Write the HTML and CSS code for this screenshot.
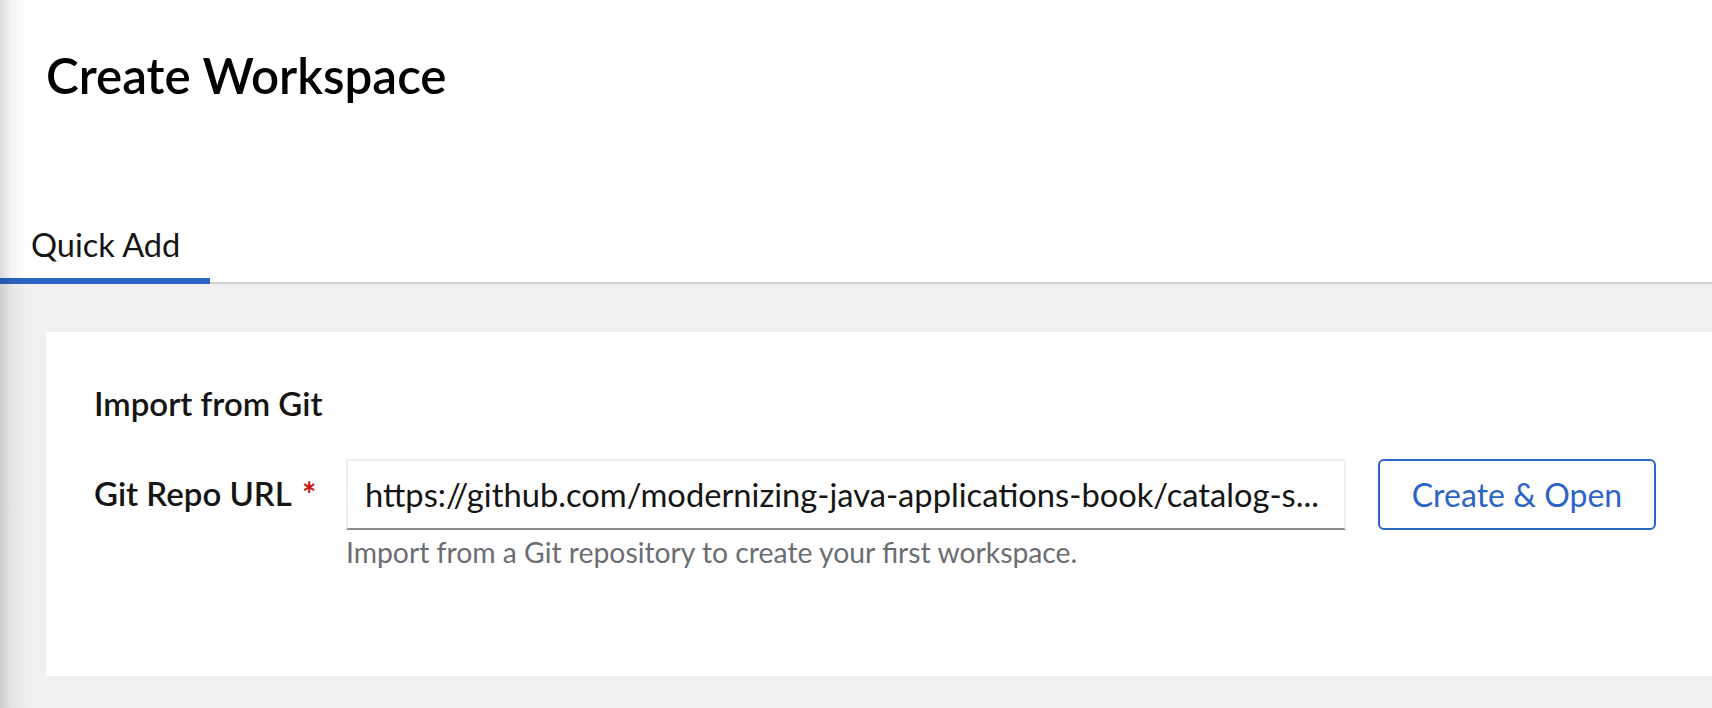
FILE: index.html
```html
<!DOCTYPE html>
<html lang="en">
<head>
<meta charset="utf-8">
<title>Create Workspace</title>
<link rel="stylesheet" href="styles.css">
</head>
<body>
<div class="page">
  <header class="page-header">
    <h1 class="title">Create Workspace</h1>
  </header>
  <nav class="tabs">
    <button class="tab tab-active">Quick Add</button>
  </nav>
  <main class="content">
    <section class="card">
      <h2 class="card-title">Import from Git</h2>
      <div class="form-row">
        <label class="label" for="repo">Git Repo URL <span class="req">*</span></label>
        <div class="field">
          <input id="repo" class="input" type="text" value="https://github.com/modernizing-java-applications-book/catalog-s...">
          <div class="helper">Import from a Git repository to create your first workspace.</div>
        </div>
        <button class="btn">Create &amp; Open</button>
      </div>
    </section>
  </main>
</div>
</body>
</html>
```
FILE: styles.css
```css
* { box-sizing: border-box; }
html, body { margin: 0; padding: 0; }
body {
  width: 1712px;
  height: 708px;
  overflow: hidden;
  background: #fff;
  font-family: Lato, "Liberation Sans", sans-serif;
  color: #151515;
}
.page {
  position: relative;
  height: 708px;
  display: flex;
  flex-direction: column;
}
.page::before {
  content: "";
  position: absolute;
  left: 0; top: 0; bottom: 0;
  width: 28px;
  background: linear-gradient(to right, rgba(0,0,0,0.14), rgba(0,0,0,0.04) 45%, rgba(0,0,0,0));
  pointer-events: none;
  z-index: 5;
}
.page-header {
  padding: 45px 0 0 46px;
}
.title {
  margin: 0;
  font-size: 49.3px;
  line-height: 61px;
  font-weight: 600;
  color: #000;
}
.tabs {
  margin-top: 119px;
  display: flex;
  box-shadow: inset 0 -2px 0 #d2d2d2;
}
.tab {
  font-family: inherit;
  background: none;
  border: 0;
  border-bottom: 6px solid #2b64c4;
  padding: 0 0 13px 31px;
  width: 210px;
  white-space: nowrap;
  text-align: left;
  font-size: 32.6px;
  line-height: 40px;
  color: #151515;
}
.content {
  flex: 1;
  background: #f0f0f0;
  padding: 48px 0 30px 46px;
}
.card {
  background: #fff;
  height: 344px;
  padding: 52px 0 0 48px;
}
.card-title {
  margin: 0;
  font-size: 33px;
  line-height: 1.2;
  font-weight: 600;
}
.form-row {
  margin-top: 35px;
  display: flex;
  align-items: flex-start;
}
.label {
  width: 252px;
  height: 71px;
  display: flex;
  align-items: center;
  font-size: 33px;
  line-height: 1.2;
  font-weight: 600;
  white-space: pre;
}
.req { color: #c9190b; margin-left: 3px; font-weight: 700; font-size: 34px; }
.field {
  width: 1000px;
}
.input {
  display: block;
  width: 1000px;
  height: 71px;
  border: 2px solid #f0f0f0;
  border-bottom-color: #8a8d90;
  padding: 0 0 0 17px;
  font-family: inherit;
  font-size: 32.7px;
  color: #151515;
  outline: none;
  background: #fff;
}
.helper {
  margin-top: 6px;
  font-size: 28.3px;
  line-height: 1.2;
  color: #6a6e73;
}
.btn {
  margin-left: 32px;
  width: 278px;
  height: 71px;
  border: 2px solid #2b64c4;
  border-radius: 6px;
  background: #fff;
  color: #2b64c4;
  font-family: inherit;
  font-size: 32px;
  padding: 0;
}
```
